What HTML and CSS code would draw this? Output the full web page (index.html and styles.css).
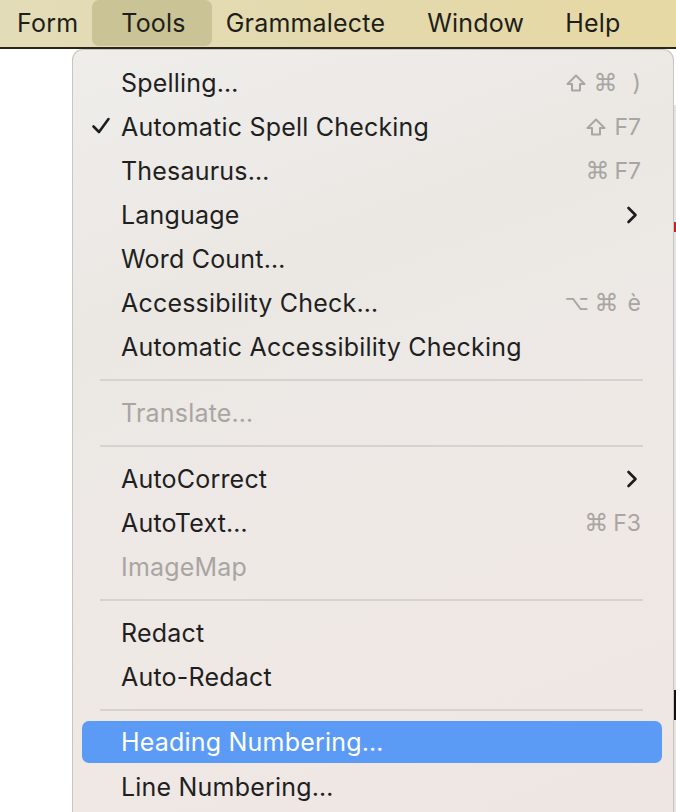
FILE: index.html
```html
<!DOCTYPE html>
<html>
<head>
<meta charset="utf-8">
<link rel="stylesheet" href="styles.css">
</head>
<body>
<header class="menubar">
  <span class="mb-item form">Form</span>
  <span class="mb-item active">Tools</span>
  <span class="mb-item gram">Grammalecte</span>
  <span class="mb-item win">Window</span>
  <span class="mb-item help">Help</span>
</header>
<main class="doc">
  <div class="doc-edge">
    <div class="edge-red"></div>
    <div class="edge-glyph g1"></div>
    <div class="edge-glyph g2"></div>
  </div>
  <div class="menu">
    <div class="row"><span class="label">Spelling…</span><span class="keys"><span class="k shift"><svg width="20" height="18" viewBox="0 0 20 18"><path d="M10 1.5 L18.5 10 H14 V16.5 H6 V10 H1.5 Z" fill="none" stroke="#a9a5a2" stroke-width="2" stroke-linejoin="round"/></svg></span><span class="k sym">⌘</span><span class="k paren">)</span></span></div>
    <div class="row"><span class="check"><svg width="20" height="20" viewBox="0 0 20 20"><polyline points="2.5,10.5 8,16 17.5,3" fill="none" stroke="#1d1d1d" stroke-width="2.6" stroke-linecap="round" stroke-linejoin="round"/></svg></span><span class="label">Automatic Spell Checking</span><span class="keys"><span class="k shift"><svg width="20" height="18" viewBox="0 0 20 18"><path d="M10 1.5 L18.5 10 H14 V16.5 H6 V10 H1.5 Z" fill="none" stroke="#a9a5a2" stroke-width="2" stroke-linejoin="round"/></svg></span><span class="k">F7</span></span></div>
    <div class="row"><span class="label">Thesaurus…</span><span class="keys narrow"><span class="k sym">⌘</span><span class="k">F7</span></span></div>
    <div class="row"><span class="label">Language</span><span class="chev"><svg width="12" height="20" viewBox="0 0 12 20"><polyline points="2.5,3 9.5,10 2.5,17" fill="none" stroke="#1d1d1d" stroke-width="2.6" stroke-linecap="round" stroke-linejoin="round"/></svg></span></div>
    <div class="row"><span class="label">Word Count…</span></div>
    <div class="row"><span class="label">Accessibility Check…</span><span class="keys opt"><span class="k sym optsym">⌥</span><span class="k sym">⌘</span><span class="k grave">è</span></span></div>
    <div class="row"><span class="label">Automatic Accessibility Checking</span></div>
    <div class="sep"></div>
    <div class="row disabled"><span class="label">Translate…</span></div>
    <div class="sep"></div>
    <div class="row"><span class="label">AutoCorrect</span><span class="chev"><svg width="12" height="20" viewBox="0 0 12 20"><polyline points="2.5,3 9.5,10 2.5,17" fill="none" stroke="#1d1d1d" stroke-width="2.6" stroke-linecap="round" stroke-linejoin="round"/></svg></span></div>
    <div class="row"><span class="label">AutoText…</span><span class="keys narrow"><span class="k sym">⌘</span><span class="k">F3</span></span></div>
    <div class="row disabled"><span class="label">ImageMap</span></div>
    <div class="sep"></div>
    <div class="row"><span class="label">Redact</span></div>
    <div class="row"><span class="label">Auto-Redact</span></div>
    <div class="sep"></div>
    <div class="row selected"><span class="label">Heading Numbering…</span></div>
    <div class="row"><span class="label">Line Numbering…</span></div>
  </div>
</main>
</body>
</html>
```
FILE: styles.css
```css
* { box-sizing: border-box; }
html, body { margin: 0; padding: 0; }
body {
  width: 676px;
  height: 812px;
  overflow: hidden;
  background: #ffffff;
  font-family: Inter, "Open Sans", Roboto, sans-serif;
  color: #1f1f1f;
}
.menubar {
  height: 49px;
  display: flex;
  align-items: flex-start;
  background: linear-gradient(90deg, #e3dcb8 0%, #e4d9ab 60%, #e7d9a4 100%);
  border-bottom: 2px solid #2a2618;
}
.mb-item {
  height: 46px;
  display: flex;
  align-items: center;
  font-size: 25px;
  letter-spacing: 0.2px;
  color: #1e1e1a;
  white-space: nowrap;
}
.mb-item.form { margin-left: 17px; }
.mb-item.active {
  background: #c9c396;
  border-radius: 7px;
  margin-left: 14px;
  padding: 0 26px 0 29px;
}
.mb-item.gram { margin-left: 14px; }
.mb-item.win { margin-left: 42px; }
.mb-item.help { margin-left: 41px; }
.doc {
  position: relative;
  height: 763px;
  overflow: hidden;
}
.doc-edge {
  position: absolute;
  left: 673px;
  top: 56px;
  width: 3px;
  bottom: 0;
  background: #e4e4e4;
}
.edge-red { position: absolute; top: 117px; left: 0; width: 3px; height: 10px; background: #c8201f; }
.edge-glyph { position: absolute; left: 0; width: 3px; background: #111; }
.g1 { top: 585px; height: 30px; }
.g2 { top: 723px; height: 30px; }
.menu {
  position: absolute;
  left: 72px;
  top: 0;
  bottom: 0;
  width: 602px;
  overflow: hidden;
  background: linear-gradient(160deg, #efedea 0%, #ebe8e4 30%, #efe9e6 60%, #eee6e3 100%);
  border: 1px solid #c9c5c2;
  border-bottom: none;
  border-radius: 11px 11px 0 0;
  padding: 11px 11px 0 9px;
  display: flex;
  flex-direction: column;
}
.row {
  height: 44px;
  flex: none;
  position: relative;
  display: flex;
  align-items: center;
  padding: 0 21px 0 39px;
  border-radius: 7px;
  font-size: 25px;
  letter-spacing: 0.2px;
  color: #1f1f1f;
}
.row.disabled { color: #a9a5a2; }
.row.selected { background: #5b9bf6; color: #ffffff; height: 42px; margin-bottom: 2px; }
.label { flex: 1; white-space: nowrap; }
.check {
  position: absolute;
  left: 9px;
  top: 11px;
  width: 20px;
  height: 20px;
  display: flex;
}
.keys {
  display: flex;
  align-items: center;
  gap: 8px;
  color: #a9a5a2;
  font-size: 23px;
  letter-spacing: 0;
}
.keys.narrow { gap: 5px; }
.keys.opt { gap: 6px; }
.k { display: flex; align-items: center; }
.k.sym { font-family: "DejaVu Sans", sans-serif; font-size: 24px; }
.k.optsym { font-size: 21px; }
.k.paren { margin-left: 7px; }
.k.grave { margin-left: 3px; }
.chev { display: flex; margin-right: 3px; }
.sep {
  height: 22px;
  flex: none;
  display: flex;
  align-items: center;
  padding: 0 19px 0 18px;
}
.sep::before {
  content: "";
  display: block;
  flex: 1;
  height: 2px;
  background: #d7d2cf;
}
```
